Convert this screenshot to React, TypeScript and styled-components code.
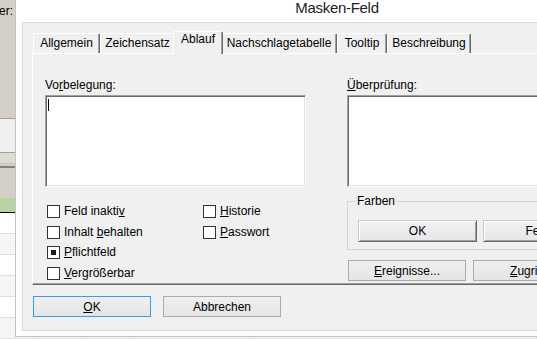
import React from "react";
import styled, { createGlobalStyle, css } from "styled-components";

const GlobalStyle = createGlobalStyle`
  html, body {
    margin: 0;
    padding: 0;
    background: #ffffff;
  }
  body {
    font-family: "Liberation Sans", Arial, sans-serif;
    font-size: 12px;
    color: #000000;
  }
  * {
    box-sizing: border-box;
  }
`;

const Desktop = styled.div`
  position: relative;
  width: 537px;
  height: 339px;
  overflow: hidden;
`;

/* window lying behind the dialog */
const BackWindow = styled.div`
  display: flex;
  flex-direction: column;
  width: 100%;
  height: 100%;
`;

const BackHeader = styled.div`
  height: 119px;
  background: #d4d0c8;
  border-bottom: 1px solid #a0a0a0;
  padding-top: 4px;
  overflow: hidden;
`;

const FilterLabel = styled.span`
  display: block;
  margin-left: -17px;
  line-height: 14px;
  white-space: nowrap;
`;

const Band = styled.div<{ $h: number; $bg: string; $line?: string; $lineW?: number }>`
  height: ${(p) => p.$h}px;
  background: ${(p) => p.$bg};
  border-bottom: ${(p) => (p.$line ? `${p.$lineW ?? 1}px solid ${p.$line}` : "none")};
`;

const GridRow = styled.div<{ $alt?: boolean }>`
  display: flex;
  height: 21px;
  background: ${(p) => (p.$alt ? "#f5f5f5" : "#ffffff")};
  border-bottom: 1px solid #e0e0e0;
`;

const GridCell = styled.div<{ $w?: number }>`
  width: ${(p) => (p.$w ? `${p.$w}px` : "auto")};
  flex: ${(p) => (p.$w ? "none" : "1")};
  border-right: 1px solid #e0e0e0;
`;

/* dialog window */
const Dialog = styled.div`
  position: absolute;
  left: 15px;
  top: -8px;
  width: 644px;
  display: flex;
  flex-direction: column;
  background: #ffffff;
  border: 1px solid #c3c3c3;
  padding: 0 6px 5px;
`;

const TitleBar = styled.div`
  height: 29px;
  line-height: 29px;
  text-align: center;
  font-size: 15px;
  letter-spacing: -0.3px;
  color: #222222;
`;

const Client = styled.div`
  display: flex;
  flex-direction: column;
  background: #f0f0f0;
  border: 1px solid #dadada;
  padding: 8px 9px 13px;
`;

const TabStrip = styled.div`
  display: flex;
  align-items: flex-end;
  height: 22px;
  padding-left: 1px;
  position: relative;
  z-index: 1;
`;

const Tab = styled.div<{ $w: number; $active?: boolean }>`
  width: ${(p) => p.$w}px;
  height: 20px;
  display: flex;
  justify-content: center;
  align-items: flex-start;
  padding-top: 2px;
  line-height: 14px;
  white-space: nowrap;
  background: #f0f0f0;
  border-top: 1px solid #ffffff;
  border-left: 1px solid #ffffff;
  border-right: 1px solid #696969;
  box-shadow: inset -1px 0 #a0a0a0;
  border-radius: 2px 2px 0 0;

  ${(p) =>
    p.$active &&
    css`
      width: ${p.$w + 4}px;
      height: 23px;
      margin: 0 -2px -1px;
      padding-top: 0;
      position: relative;
      z-index: 2;
    `}
`;

const TabPanel = styled.div`
  height: 232px;
  display: grid;
  grid-template-columns: 261px 270px;
  column-gap: 41px;
  align-content: start;
  padding: 24px 0 0 12px;
  background: #f0f0f0;
  border-top: 1px solid #ffffff;
  border-left: 1px solid #ffffff;
  border-right: 1px solid #696969;
  border-bottom: 1px solid #696969;
  box-shadow: inset -1px -1px #a0a0a0;
`;

const Column = styled.div`
  display: flex;
  flex-direction: column;
`;

const FieldLabel = styled.div`
  line-height: 15px;
  margin-bottom: 2px;
`;

const Key = styled.span`
  text-decoration: underline;
  text-underline-offset: 1px;
`;

const Memo = styled.div`
  height: 92px;
  background: #ffffff;
  border: 1px solid;
  border-color: #a0a0a0 #ffffff #ffffff #a0a0a0;
  box-shadow: inset 1px 1px #696969, inset -1px -1px #e3e3e3;
  padding: 3px 2px;
`;

const Caret = styled.div`
  width: 1px;
  height: 12px;
  background: #000000;
`;

const CheckGrid = styled.div`
  display: grid;
  grid-template-columns: 156px auto;
  row-gap: 7.5px;
  margin: 18px 0 0 2px;
`;

const CheckItem = styled.div`
  display: flex;
  align-items: center;
  gap: 4px;
  height: 13px;
  line-height: 13px;
  white-space: nowrap;
`;

const Box = styled.span`
  width: 13px;
  height: 13px;
  display: flex;
  align-items: center;
  justify-content: center;
  background: #ffffff;
  border: 1px solid #333333;
`;

const Mark = styled.span`
  width: 5px;
  height: 5px;
  background: #1a1a1a;
`;

const GroupBox = styled.div`
  position: relative;
  width: 266px;
  margin-top: 14px;
  display: flex;
  gap: 6px;
  padding: 18px 10px 7px;
  border: 1px solid #d5d5d5;
`;

const GroupTitle = styled.span`
  position: absolute;
  top: -8px;
  left: 8px;
  padding: 0 1px;
  line-height: 14px;
  background: #f0f0f0;
`;

const ClassicButton = styled.div`
  width: 119px;
  height: 22px;
  flex: none;
  display: flex;
  align-items: center;
  justify-content: center;
  background: linear-gradient(#f2f2f2, #e6e6e6);
  border: 1px solid;
  border-color: #c8c8c8 #696969 #696969 #c8c8c8;
  box-shadow: inset 1px 1px #ffffff, inset -1px -1px #a0a0a0;
  white-space: nowrap;
`;

const ButtonRow = styled.div<{ $gap: number; $top: number; $left?: number }>`
  display: flex;
  gap: ${(p) => p.$gap}px;
  margin-top: ${(p) => p.$top}px;
  padding-left: ${(p) => p.$left ?? 0}px;
`;

const Button = styled.div<{ $default?: boolean }>`
  width: 118px;
  height: 21px;
  flex: none;
  display: flex;
  align-items: center;
  justify-content: center;
  background: linear-gradient(#efefef, #e5e5e5);
  border: 1px solid ${(p) => (p.$default ? "#3399ff" : "#acacac")};
  white-space: nowrap;
`;

const tabs = [
  { label: "Allgemein", w: 67 },
  { label: "Zeichensatz", w: 75 },
  { label: "Ablauf", w: 46, active: true },
  { label: "Nachschlagetabelle", w: 116 },
  { label: "Tooltip", w: 50 },
  { label: "Beschreibung", w: 84 },
];

const Check: React.FC<{ checked?: boolean; children: React.ReactNode }> = ({ checked, children }) => (
  <CheckItem>
    <Box>{checked && <Mark />}</Box>
    <span>{children}</span>
  </CheckItem>
);

export default function App() {
  return (
    <>
      <GlobalStyle />
      <Desktop>
        <BackWindow>
          <BackHeader>
            <FilterLabel>Filter:</FilterLabel>
          </BackHeader>
          <Band $h={34} $bg="#f0f0f0" $line="#a0a0a0" />
          <Band $h={11} $bg="#dedbd3" $line="#c8c4bc" />
          <Band $h={5} $bg="#d4d0c8" $line="#808080" $lineW={2} />
          <Band $h={30} $bg="#d4d0c8" />
          <Band $h={15} $bg="#b9d3a5" $line="#000000" />
          {[0, 1, 2, 3, 4, 5].map((i) => (
            <GridRow key={i} $alt={i % 2 === 1}>
              <GridCell $w={34} />
              <GridCell $w={50} />
              <GridCell $w={50} />
              <GridCell $w={121} />
              <GridCell />
            </GridRow>
          ))}
        </BackWindow>

        <Dialog>
          <TitleBar>Masken-Feld</TitleBar>
          <Client>
            <TabStrip>
              {tabs.map((t) => (
                <Tab key={t.label} $w={t.w} $active={t.active}>
                  {t.label}
                </Tab>
              ))}
            </TabStrip>
            <TabPanel>
              <Column>
                <FieldLabel>
                  Vo<Key>r</Key>belegung:
                </FieldLabel>
                <Memo>
                  <Caret />
                </Memo>
                <CheckGrid>
                  <Check>
                    Feld inakti<Key>v</Key>
                  </Check>
                  <Check>
                    <Key>H</Key>istorie
                  </Check>
                  <Check>
                    Inhalt <Key>b</Key>ehalten
                  </Check>
                  <Check>
                    <Key>P</Key>asswort
                  </Check>
                  <Check checked>
                    <Key>P</Key>flichtfeld
                  </Check>
                  <span />
                  <Check>
                    <Key>V</Key>ergrößerbar
                  </Check>
                </CheckGrid>
              </Column>
              <Column>
                <FieldLabel>
                  <Key>Ü</Key>berprüfung:
                </FieldLabel>
                <Memo />
                <GroupBox>
                  <GroupTitle>Farben</GroupTitle>
                  <ClassicButton>OK</ClassicButton>
                  <ClassicButton>Fehler</ClassicButton>
                </GroupBox>
                <ButtonRow $gap={7} $top={10} $left={1}>
                  <Button>
                    <Key>E</Key>reignisse...
                  </Button>
                  <Button>
                    <Key>Z</Key>ugriff...
                  </Button>
                </ButtonRow>
              </Column>
            </TabPanel>
            <ButtonRow $gap={12} $top={11} $left={1}>
              <Button $default>
                <Key>O</Key>K
              </Button>
              <Button>Abbrechen</Button>
            </ButtonRow>
          </Client>
        </Dialog>
      </Desktop>
    </>
  );
}
